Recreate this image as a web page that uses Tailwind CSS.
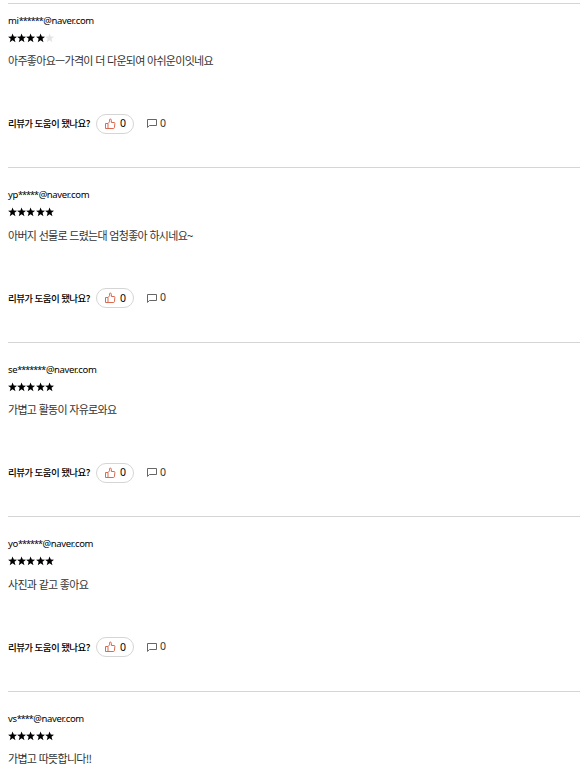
<!DOCTYPE html>
<html lang="ko">
<head>
<meta charset="utf-8">
<title>리뷰</title>
<script src="https://cdn.jsdelivr.net/npm/@tailwindcss/browser@4"></script>
</head>
<body class="bg-white overflow-hidden font-['Noto_Sans_CJK_KR',sans-serif]">
<svg class="hidden">
  <symbol id="star" viewBox="0 0 10 10"><path d="M5 .1 6.3 3.5 9.9 3.6 7.1 5.9 8.1 9.6 5 7.5 1.9 9.6 2.9 5.9 .1 3.6 3.7 3.5Z"/></symbol>
  <symbol id="thumb" viewBox="0 0 12 12"><path d="M1.5 5.5H4V10.5H1.5ZM4 5.5 5.6 3.8V1.5Q5.6 1 6.2 1Q7.5 1.1 7.4 2.6V4.5H10.2Q11 4.6 10.9 5.4L10.4 9.7Q10.2 10.5 9.4 10.5H4" fill="none" stroke="currentColor" stroke-width="1" stroke-linejoin="round"/></symbol>
  <symbol id="comment" viewBox="0 0 10 10"><path d="M.5 1.5H9.5V7.5H2.5L.5 9.4Z" fill="none" stroke="currentColor" stroke-width=".9"/></symbol>
</svg>
<main id="reviews" class="ml-2 pt-[2.9px]"></main>
<script>
const reviews = [
  ["mi", "******", 4, "아주좋아요ㅡ가격이 더 다운되여 아쉬운이잇네요", "h-[164.5px] pt-[9px]"],
  ["yp", "*****", 5, "아버지 선물로 드렸는대 엄청좋아 하시네요<span class=\"font-['Noto_Sans']\">~</span>", "h-[174.5px] pt-[19px]"],
  ["se", "*******", 5, "가볍고 활동이 자유로와요", "h-[174.5px] pt-[19px]"],
  ["yo", "******", 5, "사진과 같고 좋아요", "h-[174.5px] pt-[19px]"],
  ["vs", "****", 5, "가볍고 따뜻합니다!!", "h-[86px] pt-[19px]"]
];
const feedback = `
  <div class="mt-[45.4px] flex h-5 items-center text-[10px] text-black">
    <span class="mb-px w-[88px] text-[9.5px] font-medium tracking-[-0.57px] whitespace-nowrap">리뷰가 도움이 됐나요?</span>
    <span class="flex h-5 w-[38px] items-center rounded-full border border-[#d5d5d5] pl-[7px]"><svg class="h-3 w-3 text-[#d9694f]"><use href="#thumb"/></svg><span class="ml-1 pt-px font-['Noto_Sans'] text-[10.5px]">0</span></span>
    <svg class="mb-px ml-[13px] h-[10px] w-[10px] text-[#555]"><use href="#comment"/></svg><span class="ml-[3px] font-['Noto_Sans'] text-[10.5px] text-[#333]">0</span>
  </div>`;
document.getElementById("reviews").innerHTML = reviews.map(([name, mask, stars, text, box], n) => `
<article class="flex flex-col items-start border-t border-[#d5d5d5] ${box}">
  <p class="h-4 font-['Noto_Sans'] text-[9.5px] leading-4 tracking-[-0.35px] text-black whitespace-nowrap">${name}<span class="text-[9px] tracking-[-0.95px]">${mask}</span><span class="ml-[0.6px]">@naver.com</span></p>
  <div class="mt-[3.9px] flex h-[10px]">${[1,2,3,4,5].map(i => `<svg class="w-[9.2px] h-[10px] ${i <= stars ? "fill-black" : "fill-[#e4e4e4]"}"><use href="#star"/></svg>`).join("")}</div>
  <p class="mt-[9.7px] h-4 text-[11px] leading-4 tracking-[-0.7px] text-[#333] whitespace-nowrap">${text}</p>
  ${n < 4 ? feedback : ""}
</article>`).join("");
</script>
</body>
</html>
